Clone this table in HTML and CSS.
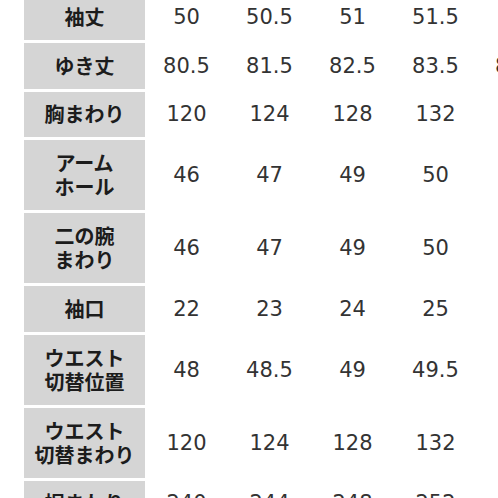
FILE: index.html
```html
<!DOCTYPE html>
<html lang="ja">
<head>
<meta charset="utf-8">
<title>サイズ表</title>
<link rel="stylesheet" href="styles.css">
</head>
<body>
<table class="size-table">
  <tbody>
    <tr class="single"><th>袖丈</th><td>50</td><td>50.5</td><td>51</td><td>51.5</td><td>52</td></tr>
    <tr class="single"><th>ゆき丈</th><td>80.5</td><td>81.5</td><td>82.5</td><td>83.5</td><td>84.5</td></tr>
    <tr class="single"><th>胸まわり</th><td>120</td><td>124</td><td>128</td><td>132</td><td>136</td></tr>
    <tr class="double"><th>アーム<br>ホール</th><td>46</td><td>47</td><td>49</td><td>50</td><td>51</td></tr>
    <tr class="double"><th>二の腕<br>まわり</th><td>46</td><td>47</td><td>49</td><td>50</td><td>51</td></tr>
    <tr class="single"><th>袖口</th><td>22</td><td>23</td><td>24</td><td>25</td><td>26</td></tr>
    <tr class="double"><th>ウエスト<br>切替位置</th><td>48</td><td>48.5</td><td>49</td><td>49.5</td><td>50</td></tr>
    <tr class="double"><th>ウエスト<br>切替まわり</th><td>120</td><td>124</td><td>128</td><td>132</td><td>136</td></tr>
    <tr class="single"><th>裾まわり</th><td>240</td><td>244</td><td>248</td><td>252</td><td>256</td></tr>
  </tbody>
</table>
</body>
</html>
```

FILE: styles.css
```css
html, body {
  margin: 0;
  padding: 0;
  background: #ffffff;
  overflow: hidden;
  width: 498px;
  height: 498px;
}

.size-table {
  border-collapse: separate;
  border-spacing: 0 3px;
  margin: -8.5px 0 0 24px;
  table-layout: fixed;
  width: 536px;
}

.size-table th {
  width: 121px;
  background: #d5d5d5;
  color: #1c1c1c;
  font-family: "Noto Sans CJK JP", "Noto Sans", sans-serif;
  font-weight: 700;
  font-size: 20px;
  line-height: 24px;
  text-align: center;
  vertical-align: middle;
  padding: 0;
  white-space: nowrap;
}

.size-table td {
  width: 83px;
  color: #333333;
  font-family: "DejaVu Sans", Verdana, sans-serif;
  font-size: 21px;
  text-align: center;
  vertical-align: middle;
  padding: 0;
  white-space: nowrap;
}

.single th, .single td {
  height: 45.5px;
}

.double th, .double td {
  height: 70px;
}
```
